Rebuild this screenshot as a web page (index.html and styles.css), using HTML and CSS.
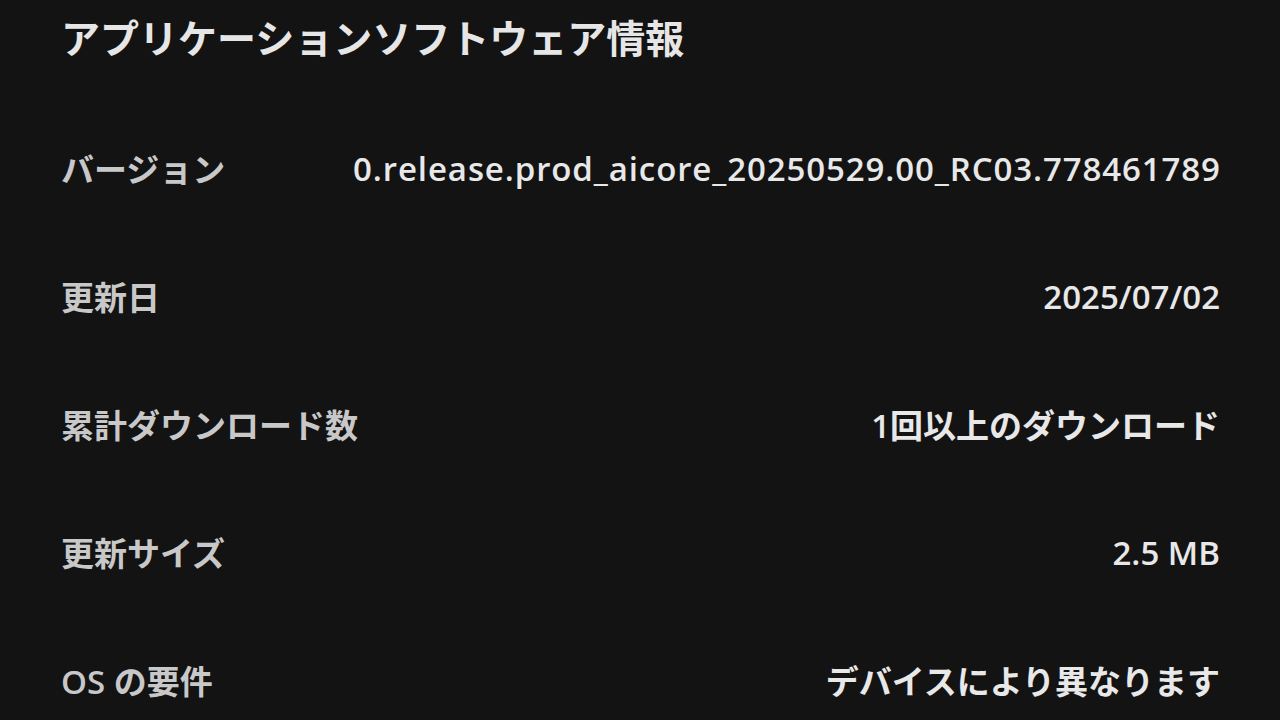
FILE: index.html
```html
<!DOCTYPE html>
<html lang="ja">
<head>
<meta charset="utf-8">
<link rel="stylesheet" href="styles.css">
</head>
<body>
<main class="page">
  <h1 class="title">アプリケーションソフトウェア情報</h1>
  <dl class="info">
    <div class="row"><dt class="label">バージョン</dt><dd class="value value-version">0.release.prod_aicore_20250529.00_RC03.778461789</dd></div>
    <div class="row"><dt class="label">更新日</dt><dd class="value">2025/07/02</dd></div>
    <div class="row"><dt class="label">累計ダウンロード数</dt><dd class="value">1回以上のダウンロード</dd></div>
    <div class="row"><dt class="label">更新サイズ</dt><dd class="value">2.5 MB</dd></div>
    <div class="row"><dt class="label">OS の要件</dt><dd class="value">デバイスにより異なります</dd></div>
  </dl>
</main>
</body>
</html>
```
FILE: styles.css
```css
html, body {
  margin: 0;
  padding: 0;
  background: #131314;
}
body {
  width: 1280px;
  height: 720px;
  overflow: hidden;
  font-family: "Open Sans", "Noto Sans CJK JP", sans-serif;
}
.page {
  padding: 0 60px 0 61px;
}
.title {
  margin: 0;
  height: 76px;
  line-height: 76px;
  font-size: 39px;
  font-weight: 700;
  color: #e6e6e6;
}
.info {
  margin: 28px 0 0;
}
.row {
  height: 128px;
  display: flex;
  align-items: center;
  justify-content: space-between;
  font-size: 33px;
  font-weight: 600;
}
.label {
  color: #c8c8c8;
}
.value {
  margin: 0;
  color: #e8e8e8;
  text-align: right;
}
.value-version {
  letter-spacing: 0.9px;
  margin-right: -0.9px;
}
```
